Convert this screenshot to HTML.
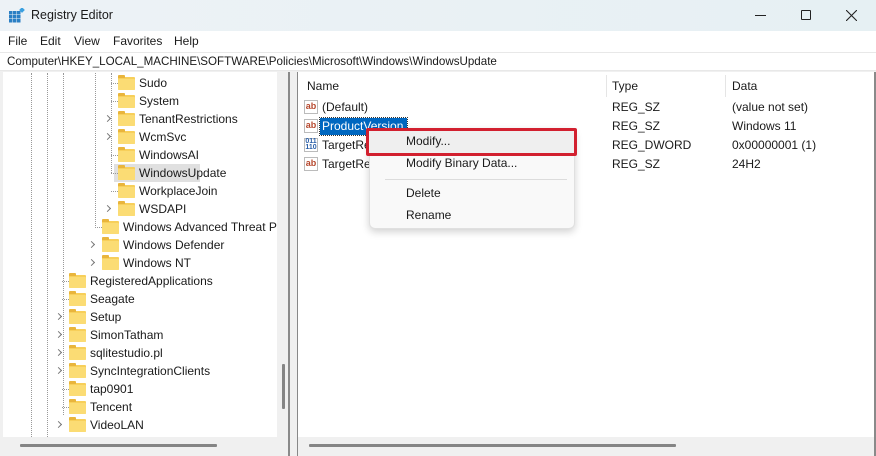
<!DOCTYPE html>
<html><head><style>
*{margin:0;padding:0;box-sizing:border-box}
body{width:876px;height:456px;overflow:hidden;background:#eef3f7;font-family:"Liberation Sans",sans-serif;font-size:12px;color:#1a1a1a;position:relative}
.a{position:absolute;white-space:nowrap}
.t{position:absolute;white-space:nowrap;line-height:18px;font-size:12px}
.f{position:absolute;width:17px;height:13px;background:#f7cf5a;border-radius:1px}
.f:before{content:"";position:absolute;left:0;top:-2px;width:7px;height:3px;background:#e9b53c;border-radius:1px 1px 0 0}
.f:after{content:"";position:absolute;left:0;top:2px;width:17px;height:11px;background:#fbdc74;border-radius:1px}
.ch{position:absolute;width:5px;height:5px;border-right:1px solid #777;border-top:1px solid #777;transform:rotate(45deg)}
.vd{position:absolute;width:0;border-left:1px dotted #999}
.hd{position:absolute;height:0;border-top:1px dotted #999;width:8px}
.ab{position:absolute;width:14px;height:14px;border:1px solid #bbb;background:#fff;font-size:9px;font-weight:bold;color:#b5472c;line-height:11px;text-align:center}
</style></head><body>
<!-- title bar -->
<div class="a" style="left:0;top:0;width:876px;height:31px;background:linear-gradient(90deg,#edf2f6,#e6f0f3)"></div>
<svg class="a" style="left:9px;top:8px" width="16" height="15"><g fill="#2a7fc4"><rect x="0" y="3" width="3.5" height="3.5"/><rect x="4" y="3" width="3.5" height="3.5"/><rect x="8" y="3" width="3.5" height="3.5"/><rect x="0" y="7" width="3.5" height="3.5"/><rect x="4" y="7" width="3.5" height="3.5"/><rect x="8" y="7" width="3.5" height="3.5"/><rect x="0" y="11" width="3.5" height="3.5"/><rect x="4" y="11" width="3.5" height="3.5"/><rect x="8" y="11" width="3.5" height="3.5"/></g><rect x="11" y="0" width="4" height="4" fill="#3aa0e0" transform="rotate(45 13 2)"/></svg>
<div class="a" style="left:31px;top:8px;font-size:12.5px">Registry Editor</div>
<div class="a" style="left:755px;top:15px;width:11px;height:1px;background:#222"></div>
<div class="a" style="left:801px;top:10px;width:10px;height:10px;border:1px solid #222;border-radius:1px"></div>
<svg class="a" style="left:846px;top:10px" width="11" height="11"><path d="M0 0L11 11M11 0L0 11" stroke="#222" stroke-width="1.1"/></svg>
<!-- menu -->
<div class="a" style="left:0;top:31px;width:876px;height:21px;background:#fff"></div>
<div class="a" style="left:8px;top:34px;font-size:12px">File</div>
<div class="a" style="left:40px;top:34px">Edit</div>
<div class="a" style="left:74px;top:34px">View</div>
<div class="a" style="left:113px;top:34px">Favorites</div>
<div class="a" style="left:174px;top:34px">Help</div>
<!-- address -->
<div class="a" style="left:0;top:52px;width:876px;height:19px;background:#fff;border-top:1px solid #e8e8e8;border-bottom:1px solid #e8e8e8"></div>
<div class="a" style="left:7px;top:55px;font-size:11.6px">Computer\HKEY_LOCAL_MACHINE\SOFTWARE\Policies\Microsoft\Windows\WindowsUpdate</div>
<div class="a" style="left:0;top:71px;width:876px;height:385px;background:#f0f0f0"></div>
<!-- tree pane -->
<div class="a" style="left:3px;top:72px;width:274px;height:365px;background:#fff"></div>
<div class="a" style="left:277px;top:72px;width:11px;height:365px;background:#f0f0f0"></div>
<div class="a" style="left:282px;top:364px;width:3px;height:45px;background:#858585;border-radius:1px"></div>
<div class="a" style="left:3px;top:437px;width:285px;height:16px;background:#f0f0f0"></div>
<div class="a" style="left:20px;top:444px;width:197px;height:3px;background:#858585;border-radius:1px"></div>
<div class="a" style="left:288px;top:72px;width:2px;height:384px;background:#8a8a8a"></div>
<div class="vd" style="left:31px;top:73px;height:364px"></div>
<div class="vd" style="left:47px;top:73px;height:364px"></div>
<div class="vd" style="left:63px;top:73px;height:200px"></div>
<div class="vd" style="left:95px;top:73px;height:155px"></div>
<div class="vd" style="left:111px;top:73px;height:100px"></div>
<div class="vd" style="left:63px;top:275px;height:140px"></div>

<div class="a" style="left:114px;top:164px;width:86px;height:18px;background:#e0e0e0"></div>
<div id="tree"></div>
<!-- splitter -->
<div class="a" style="left:297px;top:72px;width:1px;height:384px;background:#888"></div>
<!-- right pane -->
<div class="a" style="left:298px;top:72px;width:576px;height:365px;background:#fff"></div>
<div class="a" style="left:298px;top:437px;width:576px;height:16px;background:#f0f0f0"></div>
<div class="a" style="left:309px;top:444px;width:367px;height:3px;background:#858585;border-radius:1px"></div>
<div class="a" style="left:874px;top:72px;width:2px;height:384px;background:#8a8a8a"></div>
<div class="a" style="left:606px;top:75px;width:1px;height:22px;background:#e5e5e5"></div>
<div class="a" style="left:725px;top:75px;width:1px;height:22px;background:#e5e5e5"></div>
<div class="t" style="left:307px;top:77px">Name</div>
<div class="t" style="left:612px;top:77px">Type</div>
<div class="t" style="left:732px;top:77px">Data</div>

<div class="ab" style="left:304px;top:100px">ab</div>
<div class="t" style="left:322px;top:98px">(Default)</div>
<div class="ab" style="left:304px;top:119px">ab</div>
<div class="a" style="left:320px;top:118px;width:87px;height:17px;background:#0067c0;outline:1px dotted #333"></div>
<div class="t" style="left:322px;top:117px;color:#fff">ProductVersion</div>
<div class="ab" style="left:304px;top:138px;color:#2a5fa8;font-size:7px;line-height:6px">011<br>110</div>
<div class="t" style="left:322px;top:136px">TargetRe</div>
<div class="ab" style="left:304px;top:157px">ab</div>
<div class="t" style="left:322px;top:155px">TargetRe</div>

<div class="t" style="left:612px;top:98px">REG_SZ</div>
<div class="t" style="left:612px;top:117px">REG_SZ</div>
<div class="t" style="left:612px;top:136px">REG_DWORD</div>
<div class="t" style="left:612px;top:155px">REG_SZ</div>
<div class="t" style="left:732px;top:98px">(value not set)</div>
<div class="t" style="left:732px;top:117px">Windows 11</div>
<div class="t" style="left:732px;top:136px">0x00000001 (1)</div>
<div class="t" style="left:732px;top:155px">24H2</div>

<!-- context menu -->
<div class="a" style="left:369px;top:128px;width:206px;height:101px;background:#f9f9f9;border:1px solid #e0e0e0;border-radius:6px;box-shadow:0 3px 8px rgba(0,0,0,.18)"></div>
<div class="a" style="left:366px;top:128px;width:211px;height:28px;border:3px solid #d2202f;background:#efefef;border-radius:2px"></div>
<div class="t" style="left:406px;top:132px">Modify...</div>
<div class="t" style="left:406px;top:154px">Modify Binary Data...</div>
<div class="a" style="left:385px;top:179px;width:182px;height:1px;background:#dcdcdc"></div>
<div class="t" style="left:406px;top:184px">Delete</div>
<div class="t" style="left:406px;top:206px">Rename</div>

<script>
var rows=[["Sudo",3,0],["System",3,0],["TenantRestrictions",3,1],["WcmSvc",3,1],["WindowsAI",3,0],["WindowsUpdate",3,0],["WorkplaceJoin",3,0],["WSDAPI",3,1],["Windows Advanced Threat P",2,0],["Windows Defender",2,1],["Windows NT",2,1],["RegisteredApplications",1,0],["Seagate",1,0],["Setup",1,1],["SimonTatham",1,1],["sqlitestudio.pl",1,1],["SyncIntegrationClients",1,1],["tap0901",1,0],["Tencent",1,0],["VideoLAN",1,1]];
var fx={3:118,2:102,1:69},h="";
rows.forEach(function(r,i){var y=74+i*18,x=fx[r[1]];
if(r[2])h+='<div class="ch" style="left:'+(x-13)+'px;top:'+(y+6)+'px"></div>';
else h+='<div class="hd" style="left:'+(x-7)+'px;top:'+(y+9)+'px;width:7px"></div>';
h+='<div class="f" style="left:'+x+'px;top:'+(y+3)+'px"></div>';
h+='<div class="t" style="left:'+(x+21)+'px;top:'+y+'px">'+r[0]+'</div>';});
document.getElementById("tree").innerHTML=h;
</script>
</body></html>
